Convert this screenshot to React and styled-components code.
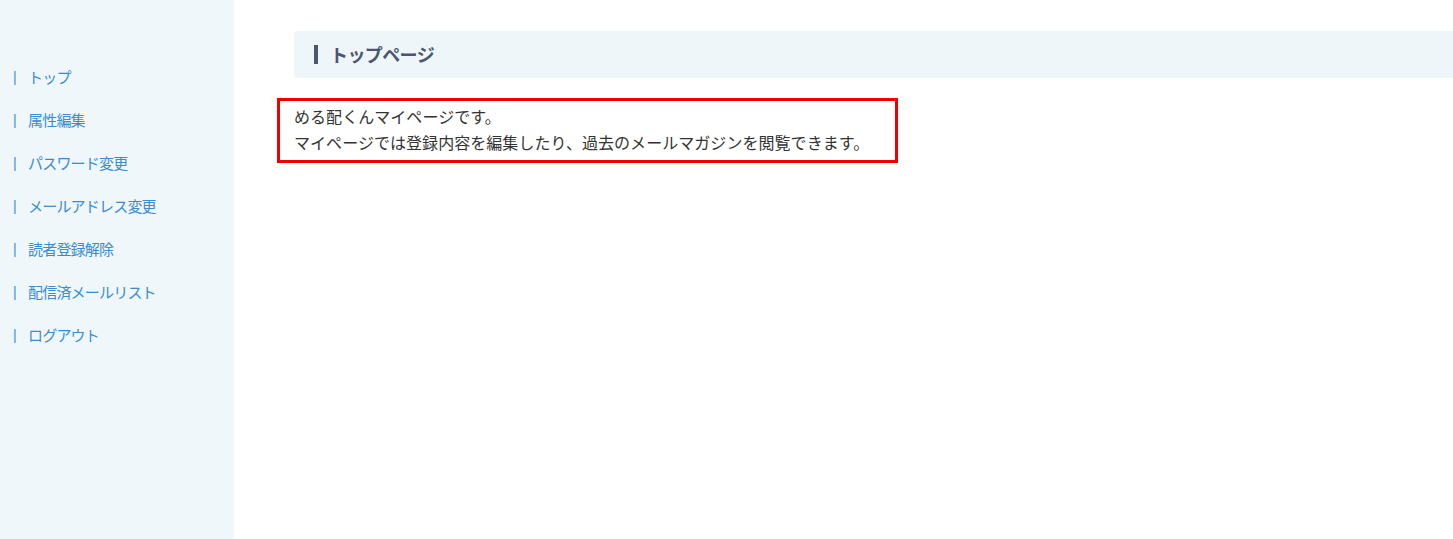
import React from 'react';
import styled, { createGlobalStyle } from 'styled-components';

const GlobalStyle = createGlobalStyle`
  html, body {
    margin: 0;
    padding: 0;
    background: #ffffff;
  }
  body {
    font-family: "Noto Sans CJK JP", "Noto Sans", sans-serif;
    color: #333333;
  }
`;

const menu = [
  'トップ',
  '属性編集',
  'パスワード変更',
  'メールアドレス変更',
  '読者登録解除',
  '配信済メールリスト',
  'ログアウト',
];

const App = () => {
  return (
    <>
      <GlobalStyle />
      <Layout>
        <Sidebar>
          <NavList>
            {menu.map((label) => (
              <NavItem key={label}>
                <NavLink href="#">{label}</NavLink>
              </NavItem>
            ))}
          </NavList>
        </Sidebar>
        <Main>
          <PageTitle>トップページ</PageTitle>
          <Notice>
            <p>める配くんマイページです。</p>
            <p>マイページでは登録内容を編集したり、過去のメールマガジンを閲覧できます。</p>
          </Notice>
        </Main>
      </Layout>
    </>
  );
};

export default App;

const Layout = styled.div`
  display: flex;
  min-height: 100vh;
`;

const Sidebar = styled.aside`
  width: 234px;
  flex-shrink: 0;
  background-color: #f0f7fb;
  padding-top: 55px;
  box-sizing: border-box;
`;

const NavList = styled.ul`
  list-style: none;
  margin: 0;
  padding: 0;
`;

const NavItem = styled.li`
  height: 43px;
  display: flex;
  align-items: center;
  padding-left: 13px;
  &::before {
    content: '|';
    color: #3b8fd3;
    font-family: "Liberation Sans", sans-serif;
    font-size: 14px;
    width: 15px;
  }
`;

const NavLink = styled.a`
  color: #3a8cd0;
  font-size: 15px;
  text-decoration: none;
  letter-spacing: -0.8px;
`;

const Main = styled.main`
  flex: 1;
  padding: 31px 0 0 43px;
  box-sizing: border-box;
`;

const PageTitle = styled.h1`
  margin: 0 0 20px 17px;
  height: 47px;
  display: flex;
  align-items: center;
  padding-left: 20px;
  padding-bottom: 1px;
  box-sizing: border-box;
  background-color: #eef6fa;
  border-radius: 4px 0 0 4px;
  font-size: 18px;
  font-weight: bold;
  color: #4b5671;
  letter-spacing: -0.6px;
  &::before {
    content: '';
    width: 4px;
    height: 19px;
    background-color: #4a5670;
    margin-right: 12px;
  }
`;

const Notice = styled.div`
  width: 621px;
  box-sizing: border-box;
  border: 3px solid #ee0000;
  padding: 2px 14px 5px;
  p {
    margin: 0;
    font-size: 16px;
    line-height: 26px;
    color: #333333;
    letter-spacing: 0.05px;
  }
`;
